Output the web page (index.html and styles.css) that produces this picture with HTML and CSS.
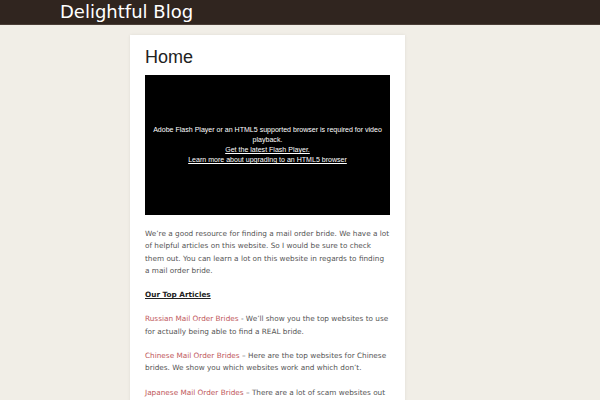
FILE: index.html
```html
<!DOCTYPE html>
<html>
<head>
<meta charset="utf-8">
<link rel="stylesheet" href="styles.css">
</head>
<body>
<header class="top">
  <div class="brand">Delightful Blog</div>
</header>
<main class="wrap">
  <article class="card">
    <h1 class="title">Home</h1>
    <div class="video">
      <p>Adobe Flash Player or an HTML5 supported browser is required for video playback.<br>
      <a href="#">Get the latest Flash Player. </a><br>
      <a href="#">Learn more about upgrading to an HTML5 browser</a></p>
    </div>
    <div class="entry">
      <p>We’re a good resource for finding a mail order bride. We have a lot of helpful articles on this website. So I would be sure to check them out. You can learn a lot on this website in regards to finding a mail order bride.</p>
      <p><strong class="u">Our Top Articles</strong></p>
      <p><a href="#">Russian Mail Order Brides</a> - We’ll show you the top websites to use for actually being able to find a REAL bride.</p>
      <p><a href="#">Chinese Mail Order Brides</a> – Here are the top websites for Chinese brides. We show you which websites work and which don’t.</p>
      <p><a href="#">Japanese Mail Order Brides</a> – There are a lot of scam websites out there. We show you which ones are real.</p>
    </div>
  </article>
</main>
</body>
</html>
```
FILE: styles.css
```css
html, body { margin: 0; padding: 0; }
body {
  background: #f1eee7;
  font-family: "DejaVu Sans", sans-serif;
  overflow: hidden;
}
.top {
  background: #30251f;
  height: 24px;
  border-bottom: 1px solid #4a3e37;
}
.brand {
  padding-left: 60px;
  color: #fff;
  font-family: "DejaVu Sans", sans-serif;
  font-size: 18px;
  line-height: 24px;
}
.wrap {
  padding-left: 130px;
  padding-top: 10px;
}
.card {
  width: 245px;
  background: #fff;
  padding: 9px 15px 20px;
  box-shadow: 0 0 3px rgba(0,0,0,0.08);
  min-height: 400px;
}
.title {
  margin: 0 0 4px;
  font-family: "Liberation Sans", Arial, sans-serif;
  font-weight: normal;
  font-size: 18px;
  line-height: 27px;
  color: #222;
}
.video {
  background: #000;
  height: 140px;
  display: flex;
  align-items: center;
  justify-content: center;
  text-align: center;
}
.video p {
  margin: 0;
  color: #fff;
  font-family: "Liberation Sans", Arial, sans-serif;
  font-size: 7.05px;
  line-height: 10px;
  padding: 0;
}
.video a { color: #fff; text-decoration: underline; }
.entry {
  padding-top: 13px;
  font-size: 7.3px;
  line-height: 12.3px;
  color: #555;
}
.entry p { margin: 0 0 12px; }
.entry a { color: #c0585b; text-decoration: none; }
.u { color: #222; text-decoration: underline; }
```
